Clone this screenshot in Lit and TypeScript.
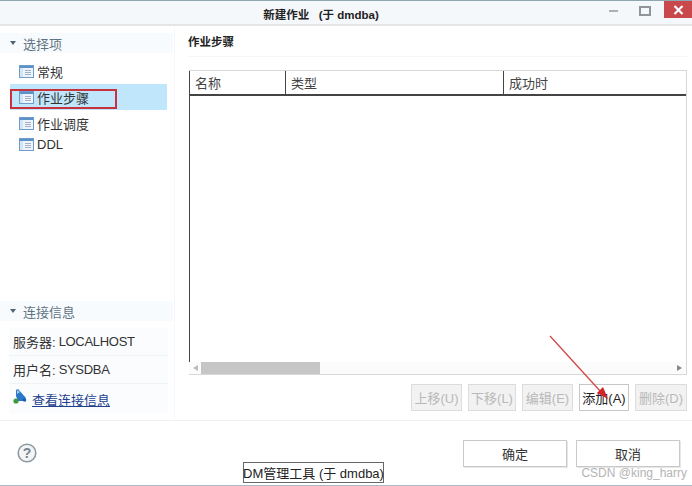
import { LitElement, html, css, svg } from "lit";
import { customElement } from "lit/decorators.js";

const itemIcon = svg`<svg class="ico" width="15" height="13" viewBox="0 0 15 13">
  <rect x="0.5" y="0.5" width="14" height="12" fill="#eef4fa" stroke="#6d9ccb"/>
  <rect x="1" y="1" width="13" height="2" fill="#5a92c9"/>
  <rect x="1" y="3" width="3" height="9" fill="#d5e4f2"/>
  <path d="M6 5.5h6M6 7.5h6M6 9.5h6" stroke="#9db2c6" stroke-width="1"/>
</svg>`;

@customElement("app-root")
export class AppRoot extends LitElement {
  static styles = css`
    :host {
      display: block;
      width: 692px;
      height: 486px;
      overflow: hidden;
      position: relative;
      background: #fff;
      color: #333;
      font-family: "Liberation Sans", "Noto Sans CJK SC", sans-serif;
      font-size: 13px;
    }
    .title {
      height: 26px;
      box-sizing: border-box;
      border-top: 1px solid #8fa6b3;
      border-bottom: 2px solid #e4e6e6;
      background: #f5f8fb;
      display: flex;
      align-items: center;
      justify-content: center;
      font-size: 11.5px;
      font-weight: bold;
      color: #222;
      position: relative;
      padding: 3px 50px 0 0;
    }
    .title span { white-space: pre; }
    .winbtns {
      position: absolute;
      right: 0;
      top: 0;
      display: flex;
      align-items: flex-start;
    }
    .min { width: 9px; height: 2px; background: #aab0b4; margin: 9px 21px 0 0; }
    .max { width: 8px; height: 6px; border: 2px solid #8f9599; margin: 5px 13px 0 0; }
    .close {
      width: 28px;
      height: 17px;
      background: #c9484c;
      display: flex;
      align-items: center;
      justify-content: center;
    }
    .body { display: flex; height: 395px; border-bottom: 1px solid #f0f1f2; box-sizing: border-box; }
    .side {
      width: 175px;
      flex: none;
      box-sizing: border-box;
      padding: 7px 0 6px 0;
      display: flex;
      flex-direction: column;
      justify-content: space-between;
      border-right: 1px solid #f6f7f8;
    }
    .sechead {
      height: 20px;
      display: flex;
      align-items: center;
      gap: 7px;
      padding-left: 10px;
      color: #5e7483;
      background: #f8fbfd;
      margin-right: 1px;
      font-size: 13px;
    }
    .tri {
      width: 0;
      height: 0;
      border-left: 3.5px solid transparent;
      border-right: 3.5px solid transparent;
      border-top: 4px solid #50646f;
    }
    .items { padding-top: 5px; display: flex; flex-direction: column; }
    .item {
      display: flex;
      align-items: center;
      gap: 3px;
      margin: 0 7px 0 10px;
      padding-left: 9px;
      height: 26px;
      color: #333;
    }
    .item.sel { background: #bfe6fb; }
    .item.tight { height: 14px; margin-top: 1px; }
    .info { padding: 0 0 0 9px; display: flex; flex-direction: column; }
    .info .sechead { margin-left: -9px; }
    .row {
      height: 28px;
      display: flex;
      align-items: center;
      padding-left: 4px;
      margin-right: 6px;
      border-bottom: 1px solid #f0f3f5;
      background: #fbfcfe;
      box-sizing: border-box;
      color: #333;
      white-space: pre;
    }
    .row b { font-weight: normal; margin-left: 3px; letter-spacing: -0.3px; }
    .sechead + .row { margin-top: 7px; }
    .linkrow { border-bottom: none; height: 30px; gap: 5px; }
    .linkicon { margin-top: -6px; flex: none; }
    .link { color: #23408e; text-decoration: underline; }
    .main { flex: 1; padding: 3px 5px 0 13px; min-width: 0; display: flex; flex-direction: column; }
    .h {
      font-size: 11.5px;
      font-weight: bold;
      color: #222;
      height: 20px;
      display: flex;
      align-items: center;
      margin-top: 2px;
    }
    .rule { height: 1px; background: #f6f7f7; margin: 5px 0 13px 0; }
    .table {
      height: 305px;
      box-sizing: border-box;
      border: 1px solid #d8d8d8;
      border-left: none;
      margin-left: 1px;
      display: flex;
      flex-direction: column;
    }
    .thead {
      display: grid;
      grid-template-columns: 96px 218px 1fr;
      height: 25px;
      box-sizing: border-box;
      border-bottom: 2px solid #444;
      border-left: 1px solid #444;
      flex: none;
    }
    .th {
      padding: 3px 0 0 5px;
      box-sizing: border-box;
      border-right: 1px solid #444;
      color: #444;
      line-height: 20px;
    }
    .th:last-child { border-right: none; }
    .tbody { flex: 1; border-left: 1px solid #444; }
    .hbar { height: 12px; flex: none; display: flex; align-items: center; background: #fbfbfb; }
    .arrow-l { width: 12px; display: flex; justify-content: center; }
    .thumb { width: 119px; height: 12px; background: #c6c6c6; }
    .spacer { flex: 1; }
    .arrow-r { width: 14px; display: flex; justify-content: center; }
    .tools { display: flex; justify-content: flex-end; gap: 6px; margin-top: 9px; }
    .btn {
      height: 27px;
      box-sizing: border-box;
      border: 1px solid #dcdcdc;
      background: #f2f2f2;
      color: #b9b9b9;
      display: flex;
      align-items: center;
      justify-content: center;
      font-size: 13px;
    }
    .btn.on { background: #fff; color: #222; border-color: #c6c6c6; }
    .foot {
      display: flex;
      justify-content: space-between;
      padding: 19px 12px 0 17px;
      height: 65px;
      box-sizing: border-box;
    }
    .help { margin-top: 3px; }
    .okrow { display: flex; gap: 9px; }
    .ok {
      width: 104px;
      height: 27px;
      box-sizing: border-box;
      border: 1px solid #c9c9c9;
      background: #fff;
      display: flex;
      align-items: center;
      justify-content: center;
      color: #333;
      box-shadow: 1px 1px 0 #e6e6e6;
    }
    .tip {
      position: absolute;
      left: 243px;
      top: 462px;
      width: 141px;
      height: 21px;
      box-sizing: border-box;
      border: 1px solid #666;
      background: #fff;
      color: #222;
      display: flex;
      align-items: center;
      justify-content: center;
      white-space: pre;
      font-size: 13px;
    }
    .redbox {
      position: absolute;
      left: 10px;
      top: 89px;
      width: 107px;
      height: 20px;
      box-sizing: border-box;
      border: 2px solid #c8323f;
    }
    .arrow { position: absolute; left: 0; top: 0; pointer-events: none; }
    .mark {
      position: absolute;
      right: 5px;
      top: 466px;
      font-size: 12px;
      color: #b4b4b4;
      white-space: pre;
    }
    .bottomline { position: absolute; left: 0; right: 0; bottom: 0; height: 1px; background: #a9bcc8; }
  `;

  render() {
    const small = ["上移(U)", "下移(L)", "编辑(E)", "添加(A)", "删除(D)"];
    const widths = [51, 48, 51, 50, 52];
    return html`
      <div class="title">
        <span>新建作业   (于 dmdba)</span>
        <div class="winbtns">
          <div class="min"></div>
          <div class="max"></div>
          <div class="close">
            <svg width="11" height="10" viewBox="0 0 11 10"><path d="M1.5 1l8 8M9.5 1l-8 8" stroke="#fff" stroke-width="2.2"/></svg>
          </div>
        </div>
      </div>
      <div class="body">
        <div class="side">
          <div>
            <div class="sechead"><span class="tri"></span>选择项</div>
            <div class="items">
              <div class="item">${itemIcon}常规</div>
              <div class="item sel">${itemIcon}作业步骤</div>
              <div class="item">${itemIcon}作业调度</div>
              <div class="item tight">${itemIcon}DDL</div>
            </div>
          </div>
          <div class="info">
            <div class="sechead"><span class="tri"></span>连接信息</div>
            <div class="row">服务器:<b>LOCALHOST</b></div>
            <div class="row">用户名:<b>SYSDBA</b></div>
            <div class="row linkrow">
              <svg class="linkicon" width="14" height="15" viewBox="0 0 14 15">
                <path d="M3 1l2-1 8 9-3 3H5L3 7z" fill="#2a78c8"/>
                <path d="M4 1l3 2-3 2z" fill="#a9cdea"/>
                <circle cx="3" cy="12" r="2.6" fill="#3a9a3c"/>
                <circle cx="11.5" cy="11" r="1.8" fill="#1f5da8"/>
              </svg>
              <span class="link">查看连接信息</span>
            </div>
          </div>
        </div>
        <div class="main">
          <div class="h">作业步骤</div>
          <div class="rule"></div>
          <div class="table">
            <div class="thead">
              <div class="th">名称</div>
              <div class="th">类型</div>
              <div class="th">成功时</div>
            </div>
            <div class="tbody"></div>
            <div class="hbar">
              <div class="arrow-l"><svg width="5" height="6" viewBox="0 0 5 6"><path d="M0 3l5-3v6z" fill="#bbb"/></svg></div>
              <div class="thumb"></div>
              <div class="spacer"></div>
              <div class="arrow-r"><svg width="5" height="6" viewBox="0 0 5 6"><path d="M5 3L0 0v6z" fill="#888"/></svg></div>
            </div>
          </div>
          <div class="tools">
            ${small.map(
              (s, i) =>
                html`<div class="btn ${i === 3 ? "on" : ""}" style="width:${widths[i]}px">${s}</div>`
            )}
          </div>
        </div>
      </div>
      <div class="foot">
        <svg class="help" width="20" height="20" viewBox="0 0 20 20">
          <circle cx="10" cy="10" r="8.8" fill="#f4f5f6" stroke="#8c9aa3" stroke-width="1.6"/>
          <text x="10" y="15" text-anchor="middle" font-size="14" font-weight="bold" fill="#76858e" font-family="Liberation Sans">?</text>
        </svg>
        <div class="okrow">
          <div class="ok">确定</div>
          <div class="ok">取消</div>
        </div>
      </div>
      <div class="bottomline"></div>
      <div class="redbox"></div>
      <svg class="arrow" width="692" height="486" viewBox="0 0 692 486">
        <path d="M550 336L601 392" stroke="#d2433f" stroke-width="1.2" fill="none"/>
        <path d="M608 399L597 393L603 387z" fill="#d2232a"/>
      </svg>
      <div class="tip">DM管理工具 (于 dmdba)</div>
      <div class="mark">CSDN @king_harry</div>
    `;
  }
}
